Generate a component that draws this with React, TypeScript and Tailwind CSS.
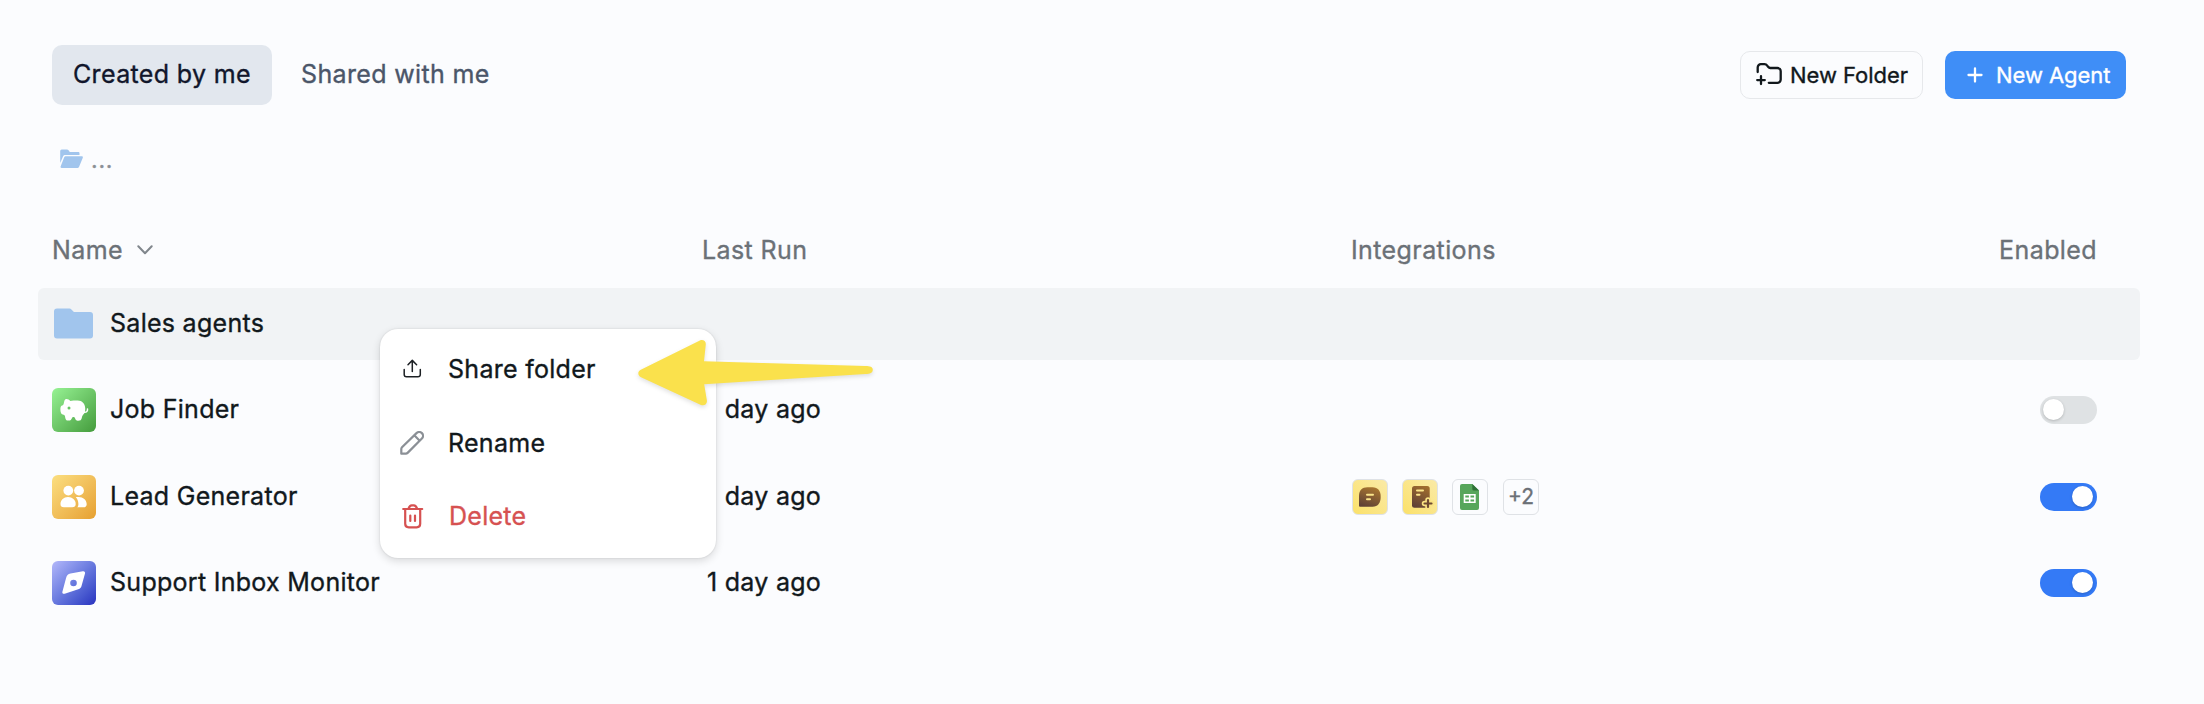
import type { ReactNode } from 'react';
import clsx from 'clsx';

function FolderPlusIcon() {
  return (
    <svg width="28" height="24" viewBox="0 0 28 24" fill="none" stroke="currentColor" strokeWidth="2.3" strokeLinecap="round" strokeLinejoin="round">
      <path d="M1.7 9V4.4A3.2 3.2 0 0 1 4.9 1.2h3.6c1.2 0 2 .4 2.7 1.4l.9 1.2c.6.8 1.300 1.200 2.200 1.200H21.500a3.200 3.200 0 0 1 3.200 3.200v8.400a3.200 3.200 0 0 1-3.200 3.200h-8.700" />
      <path d="M5 13.200v7.800M1.200 17.100h7.600" />
    </svg>
  );
}

function PlusIcon() {
  return (
    <svg width="16" height="16" viewBox="0 0 16 16" fill="none" stroke="currentColor" strokeWidth="2.3" strokeLinecap="round">
      <path d="M8 1.500v13M1.500 8h13" />
    </svg>
  );
}

function OpenFolderIcon() {
  return (
    <svg width="24" height="20" viewBox="0 0 24 20" fill="#a1c5ed">
      <path d="M.2 14V2A1.500 1.500 0 0 1 1.700.5h5.400c.5 0 .9.2 1.200.6l1.500 1.800h8.400c.8 0 1.300.5 1.300 1.300v1.800H5.200c-.9 0-1.700.5-2.100 1.300Z" />
      <path d="M5.600 7.300h16.200c.8 0 1.300.7 1 1.400l-3.700 9.100c-.3.800-.9 1.200-1.700 1.200H1.600c-.8 0-1.300-.7-1-1.400L4.200 8.300c.3-.6.800-1 1.400-1Z" />
    </svg>
  );
}

function ChevronIcon() {
  return (
    <svg width="16" height="10" viewBox="0 0 16 10" fill="none" stroke="#80868c" strokeWidth="2" strokeLinecap="round" strokeLinejoin="round">
      <path d="m1.300 1.200 6.700 7 6.700-7" />
    </svg>
  );
}

function FolderIcon() {
  return (
    <svg width="44" height="44" viewBox="0 0 44 44" fill="#a1c5ed">
      <path d="M2 9.500a3 3 0 0 1 3-3h12.500c.8 0 1.400.3 1.900.9l2 2.100c.3.400.7.600 1.200.600H38a3 3 0 0 1 3 3v20.300a3 3 0 0 1-3 3H5a3 3 0 0 1-3-3Z" />
    </svg>
  );
}

function PiggyIcon() {
  return (
    <svg width="44" height="44" viewBox="0 0 44 44">
      <path
        fill="#fff"
        d="M13.200 11.400c1.300-.8 3.700-.3 5.200 1.700 1-.4 2-.6 3.100-.6h4.200c4.500 0 7.300 3.300 7.500 7.500.1 2.200-.1 4.200-1 5.500-.7 1-1.600 1.700-2 2.700-.4 1.300-.5 2.700-1.200 3.600-.9 1.200-4.200 1.200-5.100.1-.6-.8-.9-2-1.500-2.600-.6-.5-1.300-.5-1.900 0-.8.800-.9 2-1.700 2.700-1 .9-4 .800-4.800-.3-.8-1.100-.8-3.100-1.200-4-.6-1-1.800-.8-2.700-1.400C8.200 25.300 8 19.500 9 18.200c.5-.7 1.800-.8 2.300-1.500.9-1.300.6-4.400 1.900-5.300Z"
      />
      <path fill="none" stroke="#fff" strokeWidth="1.500" strokeLinecap="round" d="M31 24c2.800.8 4.900 0 4.500-3" />
      <circle cx="17" cy="20" r="1.500" fill="#68c663" />
    </svg>
  );
}

function PeopleIcon() {
  return (
    <svg width="44" height="44" viewBox="0 0 44 44" fill="#fff">
      <circle cx="16.300" cy="15.600" r="4.900" />
      <circle cx="27" cy="15.600" r="4.900" />
      <path d="M16 22c4.300 0 7.700 3.200 7.700 7 0 2.200-1.300 3.300-3.500 3.300h-8.400c-2.200 0-3.300-1.100-3.300-3.300 0-3.800 3.200-7 7.500-7Z" />
      <path d="M23.800 22.100c.9-.1 1.900-.1 2.900-.1 4.400 0 7.900 3 8 7.200 0 2-1.200 3.100-3.300 3.100H25.200c.9-1 1.200-2 1.200-3.400-.1-2.900-1.100-4.900-2.600-6.800Z" />
    </svg>
  );
}

function CompassIcon() {
  return (
    <svg width="44" height="44" viewBox="0 0 44 44">
      <path
        fill="#fff"
        fillRule="evenodd"
        d="m18.500 12.500 12.300-2.300c1.600-.3 2.600.7 2.200 2.300l-3.500 12.600c-.3 1.400-1.200 2.400-2.500 2.900l-14.300 4.700c-1.600.5-2.700-.4-2.300-2L14 17.200c.5-2.700 2-4.200 4.500-4.700Zm3 6.200a3.300 3.300 0 1 0 0 6.600 3.300 3.300 0 0 0 0-6.600Z"
      />
    </svg>
  );
}

function NoteIcon() {
  return (
    <svg width="34" height="34" viewBox="1 1 34 34">
      <defs>
        <linearGradient id="note" x1="0.700" y1="0" x2="0.300" y2="1">
          <stop offset="0" stopColor="#a9762f" />
          <stop offset="1" stopColor="#5f4136" />
        </linearGradient>
      </defs>
      <path fill="url(#note)" d="M7 17c0-5.700 3-8.700 8.500-8.700h5c5.400 0 8.200 3.600 8.200 9.400 0 6-2.700 10-8.200 10H8a1 1 0 0 1-1-1Z" />
      <path stroke="#fbe58a" strokeWidth="2" strokeLinecap="round" d="M15 15.800h6M15 20.200h3" />
    </svg>
  );
}

function NotePlusIcon() {
  return (
    <svg width="34" height="34" viewBox="1 1 34 34">
      <defs>
        <linearGradient id="note-plus" x1="0.700" y1="0" x2="0.300" y2="1">
          <stop offset="0" stopColor="#a06c2d" />
          <stop offset="1" stopColor="#5f4136" />
        </linearGradient>
      </defs>
      <rect x="10" y="7" width="17.700" height="21.700" rx="2.500" fill="url(#note-plus)" />
      <path stroke="#fbe58a" strokeWidth="2" strokeLinecap="round" d="M15 11.500h6M15 15.800h2.500" />
      <path stroke="#fae384" strokeWidth="5.500" strokeLinecap="round" d="M26 21v7M22.500 24.500h7" />
      <path stroke="#6e4a32" strokeWidth="2.200" strokeLinecap="round" d="M26 21v7M22.500 24.500h7" />
    </svg>
  );
}

function SheetsIcon() {
  return (
    <svg width="34" height="34" viewBox="1 1 34 34">
      <path fill="#57a65b" d="M10 5h10.300L27 11.500V29a2 2 0 0 1-2 2H10a2 2 0 0 1-2-2V7a2 2 0 0 1 2-2Z" />
      <path fill="#2f7137" d="M20.300 5 27 11.500h-5.200a1.500 1.500 0 0 1-1.500-1.500Z" />
      <rect x="11.700" y="15" width="12" height="9" fill="#fff" />
      <path fill="#57a65b" d="M13.300 16.600h3.600v2h-3.600zM18.500 16.600h3.600v2h-3.600zM13.300 20.400h3.600v2h-3.600zM18.500 20.400h3.600v2h-3.600z" />
    </svg>
  );
}

function ShareIcon() {
  return (
    <svg width="24" height="24" viewBox="0 0 24 24" fill="none" stroke="#1c2024" strokeWidth="1.500" strokeLinecap="round" strokeLinejoin="round">
      <path d="M4.200 12.500v5c0 1.500.9 2.300 2.300 2.300h11.400c1.400 0 2.400-.8 2.400-2.300v-5" />
      <path d="M12.300 14.500V3.500M8 7.700l4.300-4.300 4.300 4.300" />
    </svg>
  );
}

function PencilIcon() {
  return (
    <svg width="24" height="24" viewBox="0 0 24 24" fill="none" stroke="#8b9096" strokeWidth="2.200" strokeLinejoin="round">
      <path d="M1.300 22.700v-4.800c0-.7.200-1.200.7-1.700L16.500 2.100a3.700 3.700 0 0 1 5.400 5.400L7.600 21.900c-.5.500-1 .8-1.700.8ZM14.300 4.300l5.400 5.400" />
    </svg>
  );
}

function TrashIcon() {
  return (
    <svg width="22" height="25" viewBox="0 0 22 25" fill="none" stroke="currentColor" strokeWidth="2.200" strokeLinecap="round" strokeLinejoin="round">
      <path d="M1.200 5h19M6.500 4.700c.7-2 1.700-3.400 3.200-3.400h2.200c1.500 0 2.500 1.400 3.200 3.400" />
      <path d="M3.200 5.500v14.300c0 2.200 1.300 3.500 3.500 3.500h8c2.200 0 3.500-1.300 3.500-3.500V5.500M8.300 11.500v5.500M13 11.500v5.500" />
    </svg>
  );
}

function Arrow() {
  return (
    <svg className="absolute top-[330px] left-[630px] drop-shadow-[0_2px_2px_rgba(0,0,0,0.12)]" width="250" height="86" viewBox="0 0 250 86">
      <path
        fill="#fae14c"
        d="M10.300 40 69.900 10.500c3-1.400 6.100.6 5.900 3.800L74 31.200l161.500 4.700c4.500.2 7.300.800 7.300 3.800s-2.800 4.300-7.300 4.300L74.200 54.300l2.700 16.300c.5 3.400-2.700 5.700-5.900 4.300L11 47.200c-3.300-1.600-3.600-5.600-.7-7.200Z"
      />
    </svg>
  );
}

function Toggle({ on }: { on: boolean }) {
  return (
    <div className={clsx('flex h-7 w-[57px] items-center rounded-full px-[3px] pb-px', on ? 'justify-end bg-[#347af6] pr-1' : 'bg-[#dfe2e4]')}>
      <div className="size-[21px] rounded-full bg-white shadow-[0_1px_3px_rgba(0,0,0,0.2)]" />
    </div>
  );
}

function Badge({ className, children }: { className?: string; children: ReactNode }) {
  return (
    <div className={clsx('flex size-9 items-center justify-center rounded-md border border-[#dfe2e6]', className)}>
      {children}
    </div>
  );
}

const agents = [
  { name: 'Job Finder', icon: <PiggyIcon />, tile: 'from-[#97f394] to-[#449c3c]', on: false },
  { name: 'Lead Generator', icon: <PeopleIcon />, tile: 'from-[#fbdf80] to-[#e6a02f]', on: true, integrations: true },
  { name: 'Support Inbox Monitor', icon: <CompassIcon />, tile: 'from-[#b4b8fa] to-[#2b31bf]', on: true },
];

const columns = 'grid grid-cols-[650px_649px_1fr_auto] items-center pl-[14px] pr-[43px]';

function Integrations() {
  return (
    <div className="flex items-center gap-[14px] pl-px">
      <Badge className="bg-gradient-to-tr from-[#fbe168] to-[#faeaa6]"><NoteIcon /></Badge>
      <Badge className="bg-gradient-to-tr from-[#fbe168] to-[#faeaa6]"><NotePlusIcon /></Badge>
      <Badge><SheetsIcon /></Badge>
      <Badge className="ml-px text-[21px] tracking-normal text-[#6b7076]">+2</Badge>
    </div>
  );
}

export default function App() {
  return (
    <div className="relative h-[704px] w-full overflow-hidden bg-[#fbfcfe] font-['Inter',sans-serif] text-[25px] leading-9 tracking-[0.28px] text-[#11181c] [-webkit-text-stroke:0.35px]">
      <header className="flex items-center justify-between pt-[45px] pr-[78px] pl-[52px]">
        <nav className="flex gap-[7px] tracking-[0.35px]">
          <button className="h-[60px] w-[220px] rounded-[10px] bg-[#e2e7ee] pb-[2px] pl-[21px] text-left text-[#11162b]">Created by me</button>
          <button className="h-[60px] pb-[2px] pl-[22px] text-[#4b5669]">Shared with me</button>
        </nav>
        <div className="flex gap-[22px] text-[22px] tracking-[-0.05px]">
          <button className="flex h-12 w-[183px] items-center rounded-[10px] border border-[#e6e8eb] pl-[15px]">
            <FolderPlusIcon />
            <span className="ml-[6px]">New Folder</span>
          </button>
          <button className="flex h-12 w-[181px] items-center rounded-[10px] bg-[#3f8ef7] pl-[22px] text-white">
            <PlusIcon />
            <span className="ml-[13px]">New Agent</span>
          </button>
        </div>
      </header>

      <div className="mt-9 flex h-9 items-center pl-[60px] text-[#8b9096]">
        <OpenFolderIcon />
        <span className="ml-[7px] pt-px text-[23px] tracking-[0.8px]">...</span>
      </div>

      <main className="mx-[38px] mt-[45px] w-[2102px]">
        <div className={clsx(columns, 'h-[66px] pb-[11px] tracking-[0.4px] text-[#6b7177]')}>
          <div className="flex items-center gap-[14px]">Name <ChevronIcon /></div>
          <div>Last Run</div>
          <div>Integrations</div>
          <div>Enabled</div>
        </div>

        <div className="flex flex-col gap-[14.4px]">
          <div className={clsx(columns, 'h-[72px] rounded-md bg-[#f1f3f5]')}>
            <div className="flex items-center gap-[14px]">
              <FolderIcon />
              <span className="pb-[2px]">Sales agents</span>
            </div>
          </div>
          {agents.map((agent) => (
            <div key={agent.name} className={clsx(columns, 'h-[72px]')}>
              <div className="flex items-center gap-[14px]">
                <div className={clsx('size-11 rounded-md bg-gradient-to-br', agent.tile)}>{agent.icon}</div>
                <span className="pb-[2px]">{agent.name}</span>
              </div>
              <div className="pb-[2px] pl-[5px]">1 day ago</div>
              <div>{agent.integrations && <Integrations />}</div>
              <Toggle on={agent.on} />
            </div>
          ))}
        </div>
      </main>

      <div className="absolute top-[329px] left-[380px] flex h-[229px] w-[336px] flex-col gap-[37.5px] rounded-[18px] bg-white pt-[22px] pl-5 shadow-[0_0_2px_rgba(0,0,0,0.12),0_3px_8px_rgba(0,0,0,0.14)]">
        <div className="flex items-center gap-6"><ShareIcon />Share folder</div>
        <div className="flex items-center gap-6"><PencilIcon />Rename</div>
        <div className="flex items-center gap-[25px] pl-[2px] text-[#d65151]"><TrashIcon />Delete</div>
      </div>

      <Arrow />
    </div>
  );
}
